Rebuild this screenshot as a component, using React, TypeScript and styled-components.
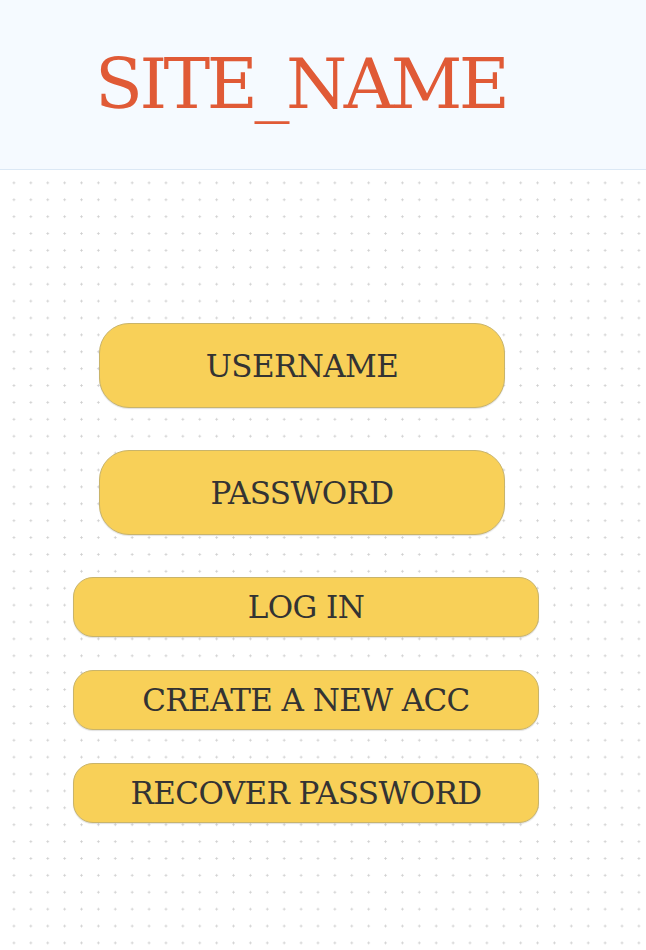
import React from 'react';
import styled, { createGlobalStyle } from 'styled-components';

const GlobalStyle = createGlobalStyle`
  html, body {
    margin: 0;
    padding: 0;
  }
  body {
    font-family: 'DejaVu Serif', 'Liberation Serif', serif;
    background-color: #ffffff;
    background-image: radial-gradient(circle, #cfcfcf 0.9px, transparent 1.3px);
    background-size: 16.9px 16.9px;
    background-position: 5.5px 5.5px;
    min-height: 950px;
  }
`;

const Page = styled.div`
  min-height: 950px;
`;

const Header = styled.header`
  height: 170px;
  background: #f5faff;
  border-bottom: 1px solid #dbe8f5;
  padding-left: 95px;
  display: flex;
  align-items: center;
  box-sizing: border-box;
`;

const SiteName = styled.h1`
  margin: 0;
  margin-top: -2px;
  font-family: 'DejaVu Serif', serif;
  font-weight: 400;
  font-size: 70px;
  letter-spacing: -3.5px;
  color: #e05a36;
`;

const Form = styled.form`
  display: flex;
  flex-direction: column;
  align-items: flex-start;
  padding-top: 153px;
`;

const Field = styled.input`
  box-sizing: border-box;
  width: 406px;
  height: 85px;
  margin-left: 99px;
  margin-bottom: 42px;
  border-radius: 30px;
  border: 1px solid #c9b46a;
  background: #f8d058;
  box-shadow: 0 1px 1px rgba(0, 0, 0, 0.12);
  text-align: center;
  font-family: 'DejaVu Serif', serif;
  font-size: 31px;
  letter-spacing: -0.6px;
  color: #333;
  outline: none;

  &::placeholder {
    color: #333;
    opacity: 1;
  }
`;

const Action = styled.button`
  box-sizing: border-box;
  width: 466px;
  height: 60px;
  margin-left: 73px;
  margin-bottom: 33px;
  border-radius: 20px;
  border: 1px solid #c9b46a;
  background: #f8d058;
  box-shadow: 0 1px 1px rgba(0, 0, 0, 0.12);
  font-family: 'DejaVu Serif', serif;
  font-size: 31px;
  letter-spacing: -0.6px;
  color: #333;
  padding: 0;
  cursor: pointer;
`;

const Spacer = styled.div`
  height: 0;
  margin-top: 0;
`;

export default function App() {
  return (
    <Page>
      <GlobalStyle />
      <Header>
        <SiteName>SITE_NAME</SiteName>
      </Header>
      <Form onSubmit={(e) => e.preventDefault()}>
        <Field type='text' placeholder='USERNAME' />
        <Field type='password' placeholder='PASSWORD' />
        <Spacer />
        <Action type='submit'>LOG IN</Action>
        <Action type='button'>CREATE A NEW ACC</Action>
        <Action type='button'>RECOVER PASSWORD</Action>
      </Form>
    </Page>
  );
}
